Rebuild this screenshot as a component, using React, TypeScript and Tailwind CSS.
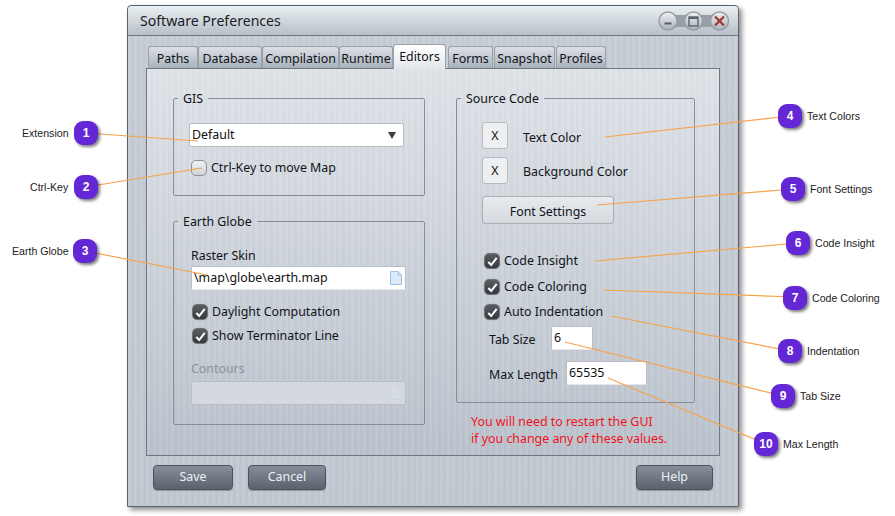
import React from 'react';

const font = "font-['Noto_Sans','Open_Sans',sans-serif]";
const windowBg =
  'bg-[repeating-linear-gradient(90deg,rgba(255,255,255,0.07)_0px,rgba(255,255,255,0.07)_3px,rgba(0,0,0,0.012)_3px,rgba(0,0,0,0.012)_6px),linear-gradient(180deg,#c5ccd4_0%,#c0c7cf_100%)]';
const paneBg =
  'bg-[repeating-linear-gradient(90deg,rgba(255,255,255,0.07)_0px,rgba(255,255,255,0.07)_3px,rgba(0,0,0,0.012)_3px,rgba(0,0,0,0.012)_6px),linear-gradient(180deg,#dfe3e8_0%,#b9c1cb_100%)]';

const tabs = [
  { label: 'Paths', width: 'w-[50px]' },
  { label: 'Database', width: 'w-[64px]' },
  { label: 'Compilation', width: 'w-[77px]' },
  { label: 'Runtime', width: 'w-[54px]' },
  { label: 'Editors', width: 'w-[53px]', active: true },
  { label: 'Forms', width: 'w-[45px] ml-[2px]' },
  { label: 'Snapshot', width: 'w-[61px] ml-[1px]' },
  { label: 'Profiles', width: 'w-[50px] ml-[1px]' },
];

const leaders = [
  [86, 133, 198, 141],
  [86, 187, 202, 168],
  [85, 251, 207, 275],
  [790, 116, 605, 137],
  [793, 189, 597, 205],
  [798, 243, 595, 261],
  [795, 297, 603, 290],
  [790, 351, 611, 316],
  [783, 396, 565, 342],
  [766, 444, 608, 378],
];

const badges = [
  { n: 1, label: 'Extension', left: 'left-[74px]', top: 'top-[121px]', text: 'left-[22px]' },
  { n: 2, label: 'Ctrl-Key', left: 'left-[74px]', top: 'top-[175px]', text: 'left-[30px]' },
  { n: 3, label: 'Earth Globe', left: 'left-[73px]', top: 'top-[239px]', text: 'left-[12px]' },
  { n: 4, label: 'Text Colors', left: 'left-[778px]', top: 'top-[104px]', text: 'left-[807px]' },
  { n: 5, label: 'Font Settings', left: 'left-[781px]', top: 'top-[177px]', text: 'left-[810px]' },
  { n: 6, label: 'Code Insight', left: 'left-[786px]', top: 'top-[231px]', text: 'left-[815px]' },
  { n: 7, label: 'Code Coloring', left: 'left-[783px]', top: 'top-[286px]', text: 'left-[812px]' },
  { n: 8, label: 'Indentation', left: 'left-[778px]', top: 'top-[339px]', text: 'left-[807px]' },
  { n: 9, label: 'Tab Size', left: 'left-[771px]', top: 'top-[384px]', text: 'left-[800px]' },
  { n: 10, label: 'Max Length', left: 'left-[754px]', top: 'top-[432px]', text: 'left-[783px]' },
];

const Check = ({ on = true }: { on?: boolean }) =>
  on ? (
    <span className="flex w-[16px] h-[16px] shrink-0 items-center justify-center rounded-[5px] border border-[#6d7278] bg-[linear-gradient(180deg,#5a5e63,#34373b)] shadow-[0_0_1px_#888]">
      <svg viewBox="0 0 14 14" className="w-[13px] h-[13px]">
        <path d="M2.5 7.5 L5.6 10.8 L11.5 3.2" fill="none" stroke="#fff" strokeWidth="2.2" />
      </svg>
    </span>
  ) : (
    <span className="block w-[16px] h-[16px] shrink-0 rounded-[5px] border border-[#8a9098] bg-[linear-gradient(180deg,#f0f1f3,#d0d3d7)]" />
  );

const DocIcon = ({ faded = false }: { faded?: boolean }) => (
  <svg viewBox="0 0 12 14" className={`w-[12px] h-[14px] shrink-0 ${faded ? 'opacity-20' : ''}`}>
    <path d="M0.5 0.5 H8 L11.5 4 V13.5 H0.5 Z" fill="#dcebfa" stroke="#9cc4ea" />
    <path d="M8 0.5 V4 H11.5" fill="#c9e0f6" stroke="#9cc4ea" />
  </svg>
);

const TextField = ({ children, className }: { children?: React.ReactNode; className: string }) => (
  <div className={`flex items-center h-[24px] bg-white rounded-[2px] border border-[#b9bec4] border-b-[#e4e6e9] pl-[2px] pr-[3px] text-[12.4px] text-[#111] ${className}`}>
    {children}
  </div>
);

const CheckRow = ({ label, on, className = '' }: { label: string; on?: boolean; className?: string }) => (
  <div className={`flex items-center gap-[4px] text-[12.4px] leading-[16px] text-[#10131a] ${className}`}>
    <Check on={on} />
    <span>{label}</span>
  </div>
);

const DarkButton = ({ label, className }: { label: string; className: string }) => (
  <button className={`h-[25px] rounded-[4px] border border-[#4a525c] bg-[linear-gradient(180deg,#858f9b_0%,#5a626d_100%)] text-[12.4px] text-[#eef1f4] shadow-[0_1px_1px_rgba(0,0,0,0.25)] ${className}`}>
    {label}
  </button>
);

const WindowButtons = () => (
  <svg viewBox="0 0 72 20" className="w-[72px] h-[20px]">
    <defs>
      <linearGradient id="wb" x1="0" y1="0" x2="0" y2="1">
        <stop offset="0" stopColor="#eef1f3" />
        <stop offset="1" stopColor="#aab2b9" />
      </linearGradient>
    </defs>
    <path d="M12 4 H60 V16 H12 Z" fill="#979ea5" />
    <circle cx="10" cy="10" r="9" fill="url(#wb)" stroke="#979ea5" strokeWidth="1.5" />
    <circle cx="35.5" cy="10" r="9" fill="url(#wb)" stroke="#979ea5" strokeWidth="1.5" />
    <circle cx="61.5" cy="10" r="9" fill="url(#wb)" stroke="#979ea5" strokeWidth="1.5" />
    <rect x="6.5" y="11.5" width="7" height="2" fill="#555c63" />
    <rect x="31" y="6" width="9" height="9" fill="none" stroke="#5a6168" strokeWidth="1.4" />
    <path d="M31 7 H40" stroke="#5a6168" strokeWidth="2" />
    <path d="M57 5.5 L66 14.5 M66 5.5 L57 14.5" stroke="#a03a34" strokeWidth="2.4" />
  </svg>
);

export default function App() {
  return (
    <div className={`relative w-[895px] h-[516px] overflow-hidden bg-white pt-[5px] pl-[127px] ${font}`}>
      {/* dialog */}
      <div className={`flex flex-col w-[612px] h-[502px] rounded-t-[4px] border border-[#59636d] shadow-[3px_3px_5px_rgba(0,0,0,0.45)] ${windowBg}`}>
        <div className="flex items-center justify-between h-[30px] shrink-0 pl-[12px] pr-[8px] rounded-t-[4px] border-b border-[#6e7883] bg-[linear-gradient(180deg,#e9eff2_0%,#b7c0c7_100%)]">
          <span className="text-[14.1px] text-[#1b2026]">Software Preferences</span>
          <WindowButtons />
        </div>

        {/* tabs */}
        <div className="flex items-end h-[32px] shrink-0 pl-[20px]">
          {tabs.map((t) =>
            t.active ? (
              <div key={t.label} className={`${t.width} relative z-10 mb-[-1px] h-[25px] rounded-t-[3px] border border-b-0 border-[#98a0a9] bg-[linear-gradient(180deg,#ffffff,#e3e6ea)] text-center text-[12.4px] leading-[23px] text-[#10131a]`}>
                {t.label}
              </div>
            ) : (
              <div key={t.label} className={`${t.width} h-[22px] rounded-t-[3px] border border-b-0 border-[#98a0a9] bg-[linear-gradient(180deg,#dde1e6,#a8b1bb)] text-center text-[12.4px] leading-[23px] text-[#10131a]`}>
                {t.label}
              </div>
            ),
          )}
        </div>

        {/* pane */}
        <div className={`flex flex-col ml-[18px] w-[574px] h-[388px] shrink-0 border border-[#6e7883] pl-[26px] pt-[20px] ${paneBg}`}>
          <div className="flex gap-[31px]">
            <div className="flex flex-col w-[252px] gap-[16px]">
              <fieldset className="h-[107px] rounded-[2px] border border-[#868d96] pl-[15px]">
                <legend className="ml-[-11px] px-[5px] text-[12.4px] leading-[18px] text-[#10131a]">
                  <span className="block translate-y-[1px]">GIS</span>
                </legend>
                <div className="flex items-center justify-between w-[215px] h-[24px] mt-[16px] bg-white rounded-[2px] border border-[#b9bec4] pl-[2px] pr-[7px] text-[12.4px] text-[#111]">
                  <span>Default</span>
                  <svg viewBox="0 0 8 7" className="w-[8px] h-[7px]">
                    <path d="M0 0 H8 L4 7 Z" fill="#3a3f45" />
                  </svg>
                </div>
                <CheckRow label="Ctrl-Key to move Map" on={false} className="mt-[13px] ml-[2px]" />
              </fieldset>

              <fieldset className="h-[213px] rounded-[2px] border border-[#868d96] pl-[17px]">
                <legend className="ml-[-13px] px-[5px] text-[12.4px] leading-[18px] text-[#10131a]">
                  <span className="block translate-y-[1px]">Earth Globe</span>
                </legend>
                <div className="mt-[17px] text-[12.4px] leading-[18px] text-[#10131a]">Raster Skin</div>
                <TextField className="w-[215px] mt-[1px] justify-between">
                  <span>\map\globe\earth.map</span>
                  <DocIcon />
                </TextField>
                <CheckRow label="Daylight Computation" className="mt-[14px] ml-[1px]" />
                <CheckRow label="Show Terminator Line" className="mt-[8px] ml-[1px]" />
                <div className="mt-[16px] text-[12.4px] leading-[18px] text-[#8b9199]">Contours</div>
                <div className="flex items-center justify-end w-[215px] h-[24px] mt-[3px] rounded-[2px] border border-[#b9bec4] bg-[#d5d9df] pr-[3px]">
                  <DocIcon faded />
                </div>
              </fieldset>
            </div>

            <div className="flex flex-col w-[239px]">
              <fieldset className="h-[314px] rounded-[2px] border border-[#868d96] pl-[25px]">
                <legend className="ml-[-21px] px-[5px] text-[12.4px] leading-[18px] text-[#10131a]">
                  <span className="block translate-y-[1px]">Source Code</span>
                </legend>
                <div className="flex items-center gap-[15px] mt-[15px] text-[12.4px] text-[#10131a]">
                  <button className="w-[26px] h-[27px] pt-[2px] rounded-[3px] border border-[#b6bbc1] bg-[#eeeff1] text-[12.4px]">X</button>
                  <span className="pt-[5px]">Text Color</span>
                </div>
                <div className="flex items-center gap-[15px] mt-[8px] text-[12.4px] text-[#10131a]">
                  <button className="w-[26px] h-[27px] pt-[2px] rounded-[3px] border border-[#b6bbc1] bg-[#eeeff1] text-[12.4px]">X</button>
                  <span className="pt-[4px]">Background Color</span>
                </div>
                <button className="block w-[132px] h-[28px] mt-[12px] pt-[5px] rounded-[3px] border border-[#a8aeb5] bg-[linear-gradient(180deg,#e8eaed_0%,#dfe2e6_45%,#d5d9de_100%)] text-[12.4px] text-[#10131a]">
                  Font Settings
                </button>
                <CheckRow label="Code Insight" className="mt-[29px] ml-[2px]" />
                <CheckRow label="Code Coloring" className="mt-[10px] ml-[2px]" />
                <CheckRow label="Auto Indentation" className="mt-[9px] ml-[2px]" />
                <div className="flex items-center gap-[16px] mt-[6px] ml-[7px] text-[12.4px] text-[#10131a]">
                  <span className="w-[46px] pt-[4px] whitespace-nowrap">Tab Size</span>
                  <TextField className="w-[42px]">6</TextField>
                </div>
                <div className="flex items-center gap-[7px] mt-[11px] ml-[7px] text-[12.4px] text-[#10131a]">
                  <span className="w-[70px] pt-[4px] whitespace-nowrap">Max Length</span>
                  <TextField className="w-[81px]">65535</TextField>
                </div>
              </fieldset>
              <p className="mt-[10px] ml-[15px] text-[12.4px] leading-[17px] text-[#f0141e]">
                You will need to restart the GUI
                <br />
                if you change any of these values.
              </p>
            </div>
          </div>
        </div>

        {/* footer */}
        <div className="flex items-start pl-[25px] pt-[9px]">
          <DarkButton label="Save" className="w-[80px]" />
          <DarkButton label="Cancel" className="w-[78px] ml-[15px]" />
          <DarkButton label="Help" className="w-[77px] ml-[310px]" />
        </div>
      </div>

      {/* callout leaders */}
      <svg viewBox="0 0 895 516" className="absolute inset-0 w-[895px] h-[516px] pointer-events-none">
        {leaders.map(([x1, y1, x2, y2], i) => (
          <line key={i} x1={x1} y1={y1} x2={x2} y2={y2} stroke="#f7a24c" strokeWidth="1.2" />
        ))}
      </svg>

      {/* callouts */}
      {badges.map((b) => (
        <React.Fragment key={b.n}>
          <div className={`absolute ${b.left} ${b.top} flex items-center justify-center w-[24px] h-[24px] rounded-[9px] bg-[#6327d6] shadow-[2px_2px_3px_rgba(0,0,0,0.5)] font-['Liberation_Sans',sans-serif] text-[12px] font-bold text-white`}>
            {b.n}
          </div>
          <div className={`absolute ${b.text} ${b.top} h-[24px] font-['Liberation_Sans',sans-serif] text-[10.6px] leading-[24px] text-[#222]`}>
            {b.label}
          </div>
        </React.Fragment>
      ))}
    </div>
  );
}
